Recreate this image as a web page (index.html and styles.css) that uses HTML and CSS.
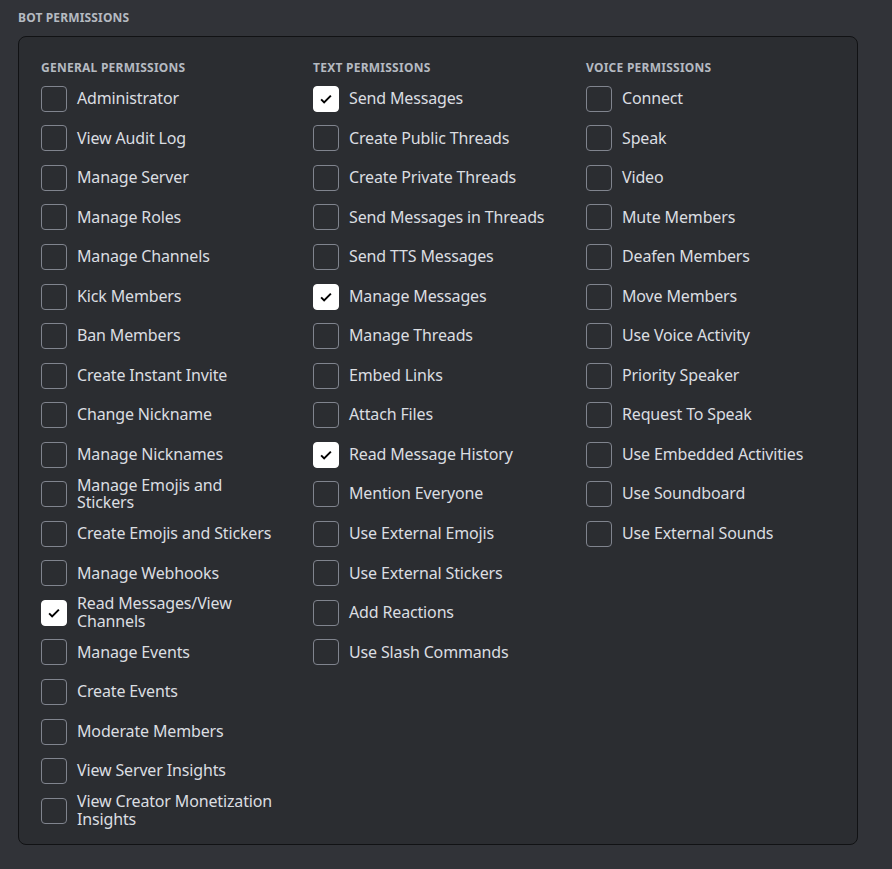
FILE: index.html
```html
<!DOCTYPE html>
<html lang="en">
<head>
    <meta charset="UTF-8">
    <title>Bot Permissions</title>
    <link rel="stylesheet" href="styles.css">
</head>
<body>
    <div class="page">
        <h2 class="title">Bot Permissions</h2>
        <div class="card">
            <div class="column">
                <h3 class="col-title">General Permissions</h3>
                <label class="item"><span class="box"></span><span class="text">Administrator</span></label>
                <label class="item"><span class="box"></span><span class="text">View Audit Log</span></label>
                <label class="item"><span class="box"></span><span class="text">Manage Server</span></label>
                <label class="item"><span class="box"></span><span class="text">Manage Roles</span></label>
                <label class="item"><span class="box"></span><span class="text">Manage Channels</span></label>
                <label class="item"><span class="box"></span><span class="text">Kick Members</span></label>
                <label class="item"><span class="box"></span><span class="text">Ban Members</span></label>
                <label class="item"><span class="box"></span><span class="text">Create Instant Invite</span></label>
                <label class="item"><span class="box"></span><span class="text">Change Nickname</span></label>
                <label class="item"><span class="box"></span><span class="text">Manage Nicknames</span></label>
                <label class="item"><span class="box"></span><span class="text">Manage Emojis and Stickers</span></label>
                <label class="item"><span class="box"></span><span class="text">Create Emojis and Stickers</span></label>
                <label class="item"><span class="box"></span><span class="text">Manage Webhooks</span></label>
                <label class="item"><span class="box checked"><svg viewBox="0 0 24 24"><path d="M5.5 12.5l4 4 9-9" /></svg></span><span class="text">Read Messages/View Channels</span></label>
                <label class="item"><span class="box"></span><span class="text">Manage Events</span></label>
                <label class="item"><span class="box"></span><span class="text">Create Events</span></label>
                <label class="item"><span class="box"></span><span class="text">Moderate Members</span></label>
                <label class="item"><span class="box"></span><span class="text">View Server Insights</span></label>
                <label class="item"><span class="box"></span><span class="text">View Creator Monetization Insights</span></label>
            </div>
            <div class="column">
                <h3 class="col-title">Text Permissions</h3>
                <label class="item"><span class="box checked"><svg viewBox="0 0 24 24"><path d="M5.5 12.5l4 4 9-9" /></svg></span><span class="text">Send Messages</span></label>
                <label class="item"><span class="box"></span><span class="text">Create Public Threads</span></label>
                <label class="item"><span class="box"></span><span class="text">Create Private Threads</span></label>
                <label class="item"><span class="box"></span><span class="text">Send Messages in Threads</span></label>
                <label class="item"><span class="box"></span><span class="text">Send TTS Messages</span></label>
                <label class="item"><span class="box checked"><svg viewBox="0 0 24 24"><path d="M5.5 12.5l4 4 9-9" /></svg></span><span class="text">Manage Messages</span></label>
                <label class="item"><span class="box"></span><span class="text">Manage Threads</span></label>
                <label class="item"><span class="box"></span><span class="text">Embed Links</span></label>
                <label class="item"><span class="box"></span><span class="text">Attach Files</span></label>
                <label class="item"><span class="box checked"><svg viewBox="0 0 24 24"><path d="M5.5 12.5l4 4 9-9" /></svg></span><span class="text">Read Message History</span></label>
                <label class="item"><span class="box"></span><span class="text">Mention Everyone</span></label>
                <label class="item"><span class="box"></span><span class="text">Use External Emojis</span></label>
                <label class="item"><span class="box"></span><span class="text">Use External Stickers</span></label>
                <label class="item"><span class="box"></span><span class="text">Add Reactions</span></label>
                <label class="item"><span class="box"></span><span class="text">Use Slash Commands</span></label>
            </div>
            <div class="column">
                <h3 class="col-title">Voice Permissions</h3>
                <label class="item"><span class="box"></span><span class="text">Connect</span></label>
                <label class="item"><span class="box"></span><span class="text">Speak</span></label>
                <label class="item"><span class="box"></span><span class="text">Video</span></label>
                <label class="item"><span class="box"></span><span class="text">Mute Members</span></label>
                <label class="item"><span class="box"></span><span class="text">Deafen Members</span></label>
                <label class="item"><span class="box"></span><span class="text">Move Members</span></label>
                <label class="item"><span class="box"></span><span class="text">Use Voice Activity</span></label>
                <label class="item"><span class="box"></span><span class="text">Priority Speaker</span></label>
                <label class="item"><span class="box"></span><span class="text">Request To Speak</span></label>
                <label class="item"><span class="box"></span><span class="text">Use Embedded Activities</span></label>
                <label class="item"><span class="box"></span><span class="text">Use Soundboard</span></label>
                <label class="item"><span class="box"></span><span class="text">Use External Sounds</span></label>
            </div>
        </div>
    </div>
</body>
</html>
```

FILE: styles.css
```css
body {
    margin: 0;
    background-color: #313338;
    font-family: "Noto Sans", "Open Sans", sans-serif;
    color: #dbdee1;
}
.page {
    padding: 10px 18px 20px;
}
.title {
    margin: 0 0 10px;
    font-size: 12px;
    line-height: 16px;
    font-weight: 700;
    letter-spacing: 0.15px;
    text-transform: uppercase;
    color: #b5bac1;
}
.card {
    width: 840px;
    box-sizing: border-box;
    display: grid;
    grid-template-columns: 272px 273px 272px;
    padding: 23px 22px 14px;
    background-color: #2b2d31;
    border: 1px solid #111214;
    border-radius: 8px;
}
.col-title {
    margin: 0 0 3px;
    font-size: 12px;
    line-height: 16px;
    font-weight: 700;
    letter-spacing: 0.25px;
    text-transform: uppercase;
    color: #b5bac1;
}
.item {
    display: flex;
    align-items: center;
    height: 39.56px;
    font-size: 16px;
    line-height: 17.5px;
    letter-spacing: -0.15px;
}
.box {
    flex: none;
    width: 26px;
    height: 26px;
    box-sizing: border-box;
    border: 1px solid #80848e;
    border-radius: 4px;
    margin-right: 10px;
    display: flex;
    align-items: center;
    justify-content: center;
}
.box.checked {
    background-color: #fff;
    border-color: #fff;
}
.box svg {
    width: 18px;
    height: 18px;
    fill: none;
    stroke: #000;
    stroke-width: 2.6;
}
.text {
    max-width: 204px;
}
```
